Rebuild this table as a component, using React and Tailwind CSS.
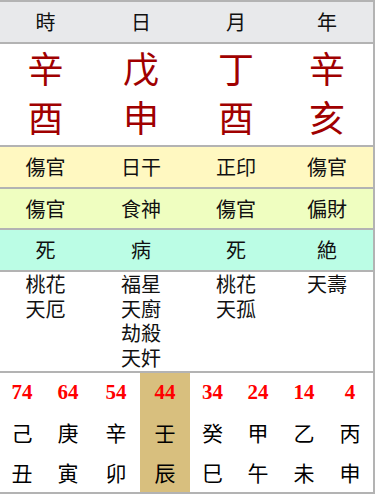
import React from "react";

const cjk = { fontFamily: '"Noto Sans CJK TC", "Noto Sans CJK JP", sans-serif' };

const header = ["時", "日", "月", "年"];
const stems = ["辛", "戊", "丁", "辛"];
const branches = ["酉", "申", "酉", "亥"];
const gods1 = ["傷官", "日干", "正印", "傷官"];
const gods2 = ["傷官", "食神", "傷官", "偏財"];
const life = ["死", "病", "死", "絶"];
const shensha = [["桃花", "天厄"], ["福星", "天廚", "劫殺", "天奸"], ["桃花", "天孤"], ["天壽"]];

const luck = [
  ["74", "己", "丑"],
  ["64", "庚", "寅"],
  ["54", "辛", "卯"],
  ["44", "壬", "辰"],
  ["34", "癸", "巳"],
  ["24", "甲", "午"],
  ["14", "乙", "未"],
  ["4", "丙", "申"],
];

export default function App() {
  return (
    <div className="w-[375px] bg-white border-t-2 border-r-2 border-b-2 border-[#b3b3b3]" style={cjk}>
      <div className="grid grid-cols-[91px_100px_90px_92px] h-[42px] bg-[#e8e9eb] border-b-2 border-[#b3b3b3] text-[20px] text-[#111]">
        {header.map((h, i) => (
          <div key={i} className="flex items-center justify-center">{h}</div>
        ))}
      </div>
      <div className="border-b-2 border-[#b3b3b3] text-[36px] text-[#a00000]">
        <div className="grid grid-cols-[91px_100px_90px_92px] h-[50px] pb-[5px]">
          {stems.map((s, i) => (
            <div key={i} className="flex items-center justify-center leading-none">{s}</div>
          ))}
        </div>
        <div className="grid grid-cols-[91px_100px_90px_92px] h-[51px] pb-[7px]">
          {branches.map((s, i) => (
            <div key={i} className="flex items-center justify-center leading-none">{s}</div>
          ))}
        </div>
      </div>
      <div className="grid grid-cols-[91px_100px_90px_92px] h-[42px] bg-[#fff8c1] border-b-2 border-[#b3b3b3] text-[20px] text-[#111]">
        {gods1.map((g, i) => (
          <div key={i} className="flex items-center justify-center">{g}</div>
        ))}
      </div>
      <div className="grid grid-cols-[91px_100px_90px_92px] h-[41px] bg-[#effec0] border-b-2 border-[#b3b3b3] text-[20px] text-[#111]">
        {gods2.map((g, i) => (
          <div key={i} className="flex items-center justify-center">{g}</div>
        ))}
      </div>
      <div className="grid grid-cols-[91px_100px_90px_92px] h-[42px] bg-[#bbfde5] border-b-2 border-[#b3b3b3] text-[20px] text-[#111]">
        {life.map((g, i) => (
          <div key={i} className="flex items-center justify-center">{g}</div>
        ))}
      </div>
      <div className="grid grid-cols-[91px_100px_90px_92px] h-[101px] border-b-2 border-[#b3b3b3] text-[20px] leading-[24.5px] text-[#111]">
        {shensha.map((list, i) => (
          <div key={i} className="flex flex-col items-center">
            {list.map((s, j) => (
              <div key={j} className="h-[24.5px]">{s}</div>
            ))}
          </div>
        ))}
      </div>
      <div className="grid grid-cols-[44px_48px_48px_50px_45px_46px_46px_46px] h-[119px]">
        {luck.map(([n, s, b], i) => (
          <div key={i} className={i === 3 ? "flex flex-col bg-[#d8bf7e]" : "flex flex-col"}>
            <div
              className="h-[40px] flex items-center justify-center text-[21px] font-bold text-[#ff0000]"
              style={{ fontFamily: '"Liberation Serif", serif' }}
            >
              {n}
            </div>
            <div className="h-[40px] flex items-center justify-center text-[21px] text-black">{s}</div>
            <div className="h-[39px] flex items-center justify-center text-[21px] text-black">{b}</div>
          </div>
        ))}
      </div>
    </div>
  );
}
